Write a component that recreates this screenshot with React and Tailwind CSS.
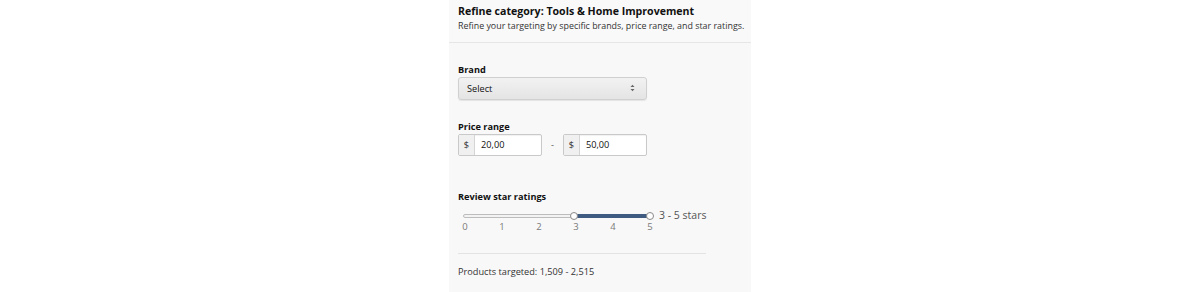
const ticks = [0, 1, 2, 3, 4, 5];

function PriceInput({ value }) {
  return (
    <div className="flex h-[22px] w-[84px] items-stretch rounded-[2px] border border-[#c9c9c9] bg-white shadow-[inset_0_1px_1px_rgba(0,0,0,0.06)]">
      <span className="flex w-[16px] items-center justify-center border-r border-[#d5d5d5] bg-[#f0f0f0] text-[#333]">$</span>
      <span className="flex items-center pl-[6px] text-[#111]">{value}</span>
    </div>
  );
}

function StarSlider() {
  // track spans 0..5 stars, selected range 3..5
  return (
    <div className="mt-[10px] flex items-start">
      <div className="w-[201px]">
        <div className="relative ml-[5px] h-[10px] w-[187px]">
          <div className="absolute left-0 right-0 top-[3px] h-[4px] rounded-full border border-[#bdbdbd] bg-[#f3f3f3]" />
          <div className="absolute left-[111px] right-0 top-[3px] h-[4px] bg-[#3f5b82]" />
          <div className="absolute left-[107px] top-[1px] h-[8px] w-[8px] rounded-full border border-[#8a8a8a] bg-white" />
          <div className="absolute left-[183px] top-[1px] h-[8px] w-[8px] rounded-full border border-[#8a8a8a] bg-white" />
        </div>
        <div className="ml-[3px] mt-[1px] flex w-[193px] justify-between text-[9.5px] text-[#7a7a7a]">
          {ticks.map((t) => (
            <span key={t} className="w-[8px] text-center">{t}</span>
          ))}
        </div>
      </div>
      <span className="-mt-[1px] text-[10.5px] text-[#555]">3 - 5 stars</span>
    </div>
  );
}

export default function App() {
  return (
    <div className="flex h-[292px] w-[1200px] justify-center bg-white font-['Open_Sans',sans-serif] text-[9px] leading-none">
      <div className="flex w-[302px] flex-col bg-[#f8f8f8]">
        <div className="border-b border-[#e6e6e6] bg-[#f9f9f9] px-[9px] pt-[6px] pb-[11px]">
          <div className="whitespace-nowrap text-[10.6px] font-bold text-[#111]">Refine category: Tools &amp; Home Improvement</div>
          <div className="mt-[5px] whitespace-nowrap text-[8.9px] text-[#333]">Refine your targeting by specific brands, price range, and star ratings.</div>
        </div>

        <div className="px-[9px] pt-[22px] text-[9.2px]">
          <div className="font-bold text-[#111]">Brand</div>
          <div className="mt-[3px] flex h-[23px] w-[189px] items-center justify-between rounded-[3px] border border-[#d0d0d0] bg-gradient-to-b from-[#f2f2f2] to-[#e4e4e4] px-[8px] text-[9.2px] shadow-[0_1px_1px_rgba(0,0,0,0.08)]">
            <span className="text-[#111]">Select</span>
            <svg width="5" height="8" viewBox="0 0 5 8" className="mr-[3px]">
              <path d="M0.5 3 L2.5 0.8 L4.5 3 Z M0.5 5 L2.5 7.2 L4.5 5 Z" fill="#666" />
            </svg>
          </div>

          <div className="mt-[22px] font-bold text-[#111]">Price range</div>
          <div className="mt-[3px] flex items-center text-[9.2px]">
            <PriceInput value="20,00" />
            <span className="mx-[9px] text-[#555]">-</span>
            <PriceInput value="50,00" />
          </div>

          <div className="mt-[36px] font-bold text-[#111]">Review star ratings</div>
          <StarSlider />

          <div className="mt-[21px] w-[248px] border-t border-[#e3e3e3]" />
          <div className="mt-[13px] text-[9.2px] text-[#333]">Products targeted: 1,509 - 2,515</div>
        </div>
      </div>
    </div>
  );
}
